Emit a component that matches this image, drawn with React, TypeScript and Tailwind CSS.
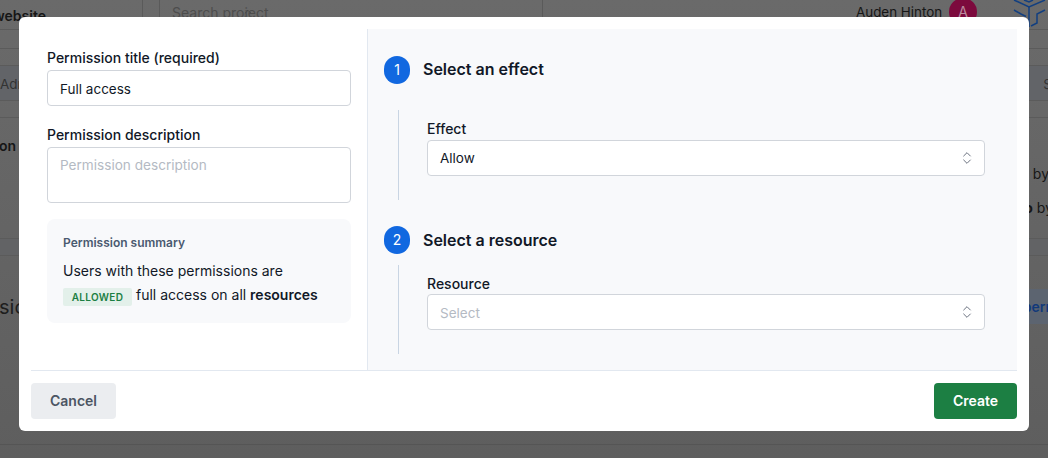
import { ChevronsUpDown } from "lucide-react";

function SelectBox({ value, placeholder }: { value?: string; placeholder?: string }) {
    return (
        <div className="flex h-9 w-full items-center justify-between rounded-[4px] border border-[#d1d5db] bg-white pl-3 pr-[9px] text-[13.5px]">
            {value ? (
                <span className="text-[#111827]">{value}</span>
            ) : (
                <span className="pt-[2px] text-[#b4bac3]">{placeholder}</span>
            )}
            <ChevronsUpDown size={16} strokeWidth={1.5} className="text-[#6b7280]" />
        </div>
    );
}

function StepHeading({ n, title, titleClass }: { n: number; title: string; titleClass?: string }) {
    return (
        <div className="flex items-center gap-[13px]">
            <div className="flex h-[28px] w-[26px] items-center justify-center rounded-full bg-[#1168e0] text-sm text-white">
                {n}
            </div>
            <h2 className={`text-base font-semibold text-[#111827] ${titleClass ?? ""}`}>{title}</h2>
        </div>
    );
}

function Backdrop() {
    return (
        <div className="h-[458px] w-full overflow-hidden bg-gradient-to-b from-[#6a6a6a] to-[#5e5e5e] text-sm text-[#161616]">
            <div className="flex h-[30px] items-center border-b border-[#5b5b5b]">
                <span className="-ml-[7px] w-[131px] pt-[3px] text-sm font-semibold">
                    website
                </span>
                <div className="flex h-full w-[142px] items-center justify-end pr-[11px]">
                    <ChevronsUpDown size={14} strokeWidth={1.5} className="text-[#3c3c3c]" />
                </div>
            </div>
            <div className="h-[19px] border-b border-[#5b5b5b]" />
            <div className="h-[17px] border-b border-[#5b5b5b]" />
            <div className="flex h-[35px] items-center justify-between border-b border-[#5b5b5b] bg-[#626468] pt-[4px] text-[13.5px] text-[#333]">
                <span>Adm</span>
                <span className="-mr-[4px]">S</span>
            </div>
            <div className="h-[17px] border-b border-[#5b5b5b]" />
            <div className="flex h-[120px] justify-between">
                <span className="-ml-[1px] pt-[18px] font-semibold">on</span>
                <div className="flex flex-col items-end gap-[14px] pt-[46px]">
                    <span className="-mr-[1px]">by</span>
                    <span className="-mr-[5px]">
                        <b>o</b> by
                    </span>
                </div>
            </div>
            <div className="h-[18px] border-y border-[#5b5b5b] bg-[#626365]" />
            <div className="flex h-[33px]" />
            <div className="flex h-[35px] items-center justify-between">
                <span className="-ml-[1px] text-xl text-[#1e1e1e]">sio</span>
                <span className="-mr-[3px] flex h-full w-[60px] items-center justify-end bg-[#5c6470] font-semibold text-[#12397a]">
                    perr
                </span>
            </div>
            <div className="h-[88px] border-b border-[#5f5f5f]" />
            <div className="h-[33px] border-b border-[#555]" />
        </div>
    );
}

export default function App() {
    return (
        <div className="relative h-[458px] w-[1048px] overflow-hidden font-['Inter',sans-serif]">
            <Backdrop />

            {/* items sticking out above the dialog */}
            <div className="absolute left-[142px] top-0 h-[17px] w-[18px] border-x border-[#5a5a5a]" />
            <span className="absolute left-[172px] top-[3px] text-sm text-[#4d4d4d]">Search project</span>
            <div className="absolute left-[542px] top-0 h-[17px] border-l border-[#5a5a5a]" />
            <span className="absolute left-[856px] top-[2px] text-[13.4px] text-[#161616]">Auden Hinton</span>
            <div className="absolute left-[949px] top-[-2px] flex h-[28px] w-[28px] items-center justify-center rounded-full bg-[#7c0a3d] text-sm text-[#b98a9e]">
                A
            </div>
            <svg
                className="absolute left-[1012px] top-0"
                width="36"
                height="30"
                viewBox="0 0 36 30"
                fill="none"
                stroke="#123f80"
                strokeWidth="1.5"
            >
                <path d="M2 0 17 7 33 0" />
                <path d="M12 0 17 2 21 0" />
                <path d="M17 7V27" />
                <path d="M19 26 25 23V14L33 10" />
                <path d="M2 10 9 14 14 16.5" />
            </svg>

            <div className="absolute inset-0 px-[19px] pt-[17px]">
                <div className="flex h-[414px] flex-col rounded-[6px] bg-white p-3 pb-3">
                    <div className="flex h-[341px]">
                        <div className="w-[337px] shrink-0 border-r border-[#e2e8f0] pl-4 pr-4 pt-[19px]">
                            <label className="block text-sm font-medium leading-[20px] text-[#111827]">
                                Permission title (required)
                            </label>
                            <div className="mt-[2px] flex h-9 items-center rounded-[4px] border border-[#d1d5db] px-3 pt-[2px] text-[13.5px] text-[#111827]">
                                Full access
                            </div>
                            <label className="mt-[19px] block text-sm font-medium leading-[20px] text-[#111827]">
                                Permission description
                            </label>
                            <div className="mt-[2px] h-[56px] rounded-[4px] border border-[#d1d5db] px-3 pt-[7px] text-[13.6px] text-[#b4bac3]">
                                Permission description
                            </div>
                            <div className="mt-4 h-[104px] rounded-lg bg-[#f8f9fb] px-4 pt-4">
                                <p className="text-xs font-semibold leading-4 text-[#4a5a70]">Permission summary</p>
                                <p className="mt-[8px] text-sm leading-6 text-[#111827]">
                                    Users with these permissions are
                                    <br />
                                    <span className="mr-1 inline-flex h-[18px] w-[69px] items-center justify-center rounded-[2px] bg-[#e3f0ea] align-[-1px] text-[10px] font-semibold tracking-[0.3px] text-[#1c7f43]">
                                        ALLOWED
                                    </span>
                                    full access on all <b className="font-semibold">resources</b>
                                </p>
                            </div>
                        </div>
                        <div className="flex-1 bg-[#f8f9fb] pl-4 pr-8 pt-[27px]">
                            <StepHeading n={1} title="Select an effect" titleClass="pb-[2px]" />
                            <div className="ml-[14px] mt-[26px] h-[90px] border-l border-[#c9d5e3] pl-[28px] pt-[9px]">
                                <label className="block text-sm font-medium leading-[20px] text-[#111827]">Effect</label>
                                <div className="mt-px">
                                    <SelectBox value="Allow" />
                                </div>
                            </div>
                            <div className="mt-[26px]">
                                <StepHeading n={2} title="Select a resource" />
                            </div>
                            <div className="ml-[14px] mt-[11px] h-[89px] border-l border-[#c9d5e3] pl-[28px] pt-[9px]">
                                <label className="block text-sm font-medium leading-[20px] text-[#111827]">Resource</label>
                                <SelectBox placeholder="Select" />
                            </div>
                        </div>
                    </div>
                    <div className="flex items-center justify-between border-t border-[#e2e8f0] pt-3">
                        <button className="h-9 w-[85px] rounded-[4px] bg-[#ebedf0] text-sm font-semibold text-[#4b5563]">
                            Cancel
                        </button>
                        <button className="h-9 w-[83px] rounded-[4px] bg-[#1c7f43] text-sm font-semibold text-white">
                            Create
                        </button>
                    </div>
                </div>
            </div>
        </div>
    );
}
